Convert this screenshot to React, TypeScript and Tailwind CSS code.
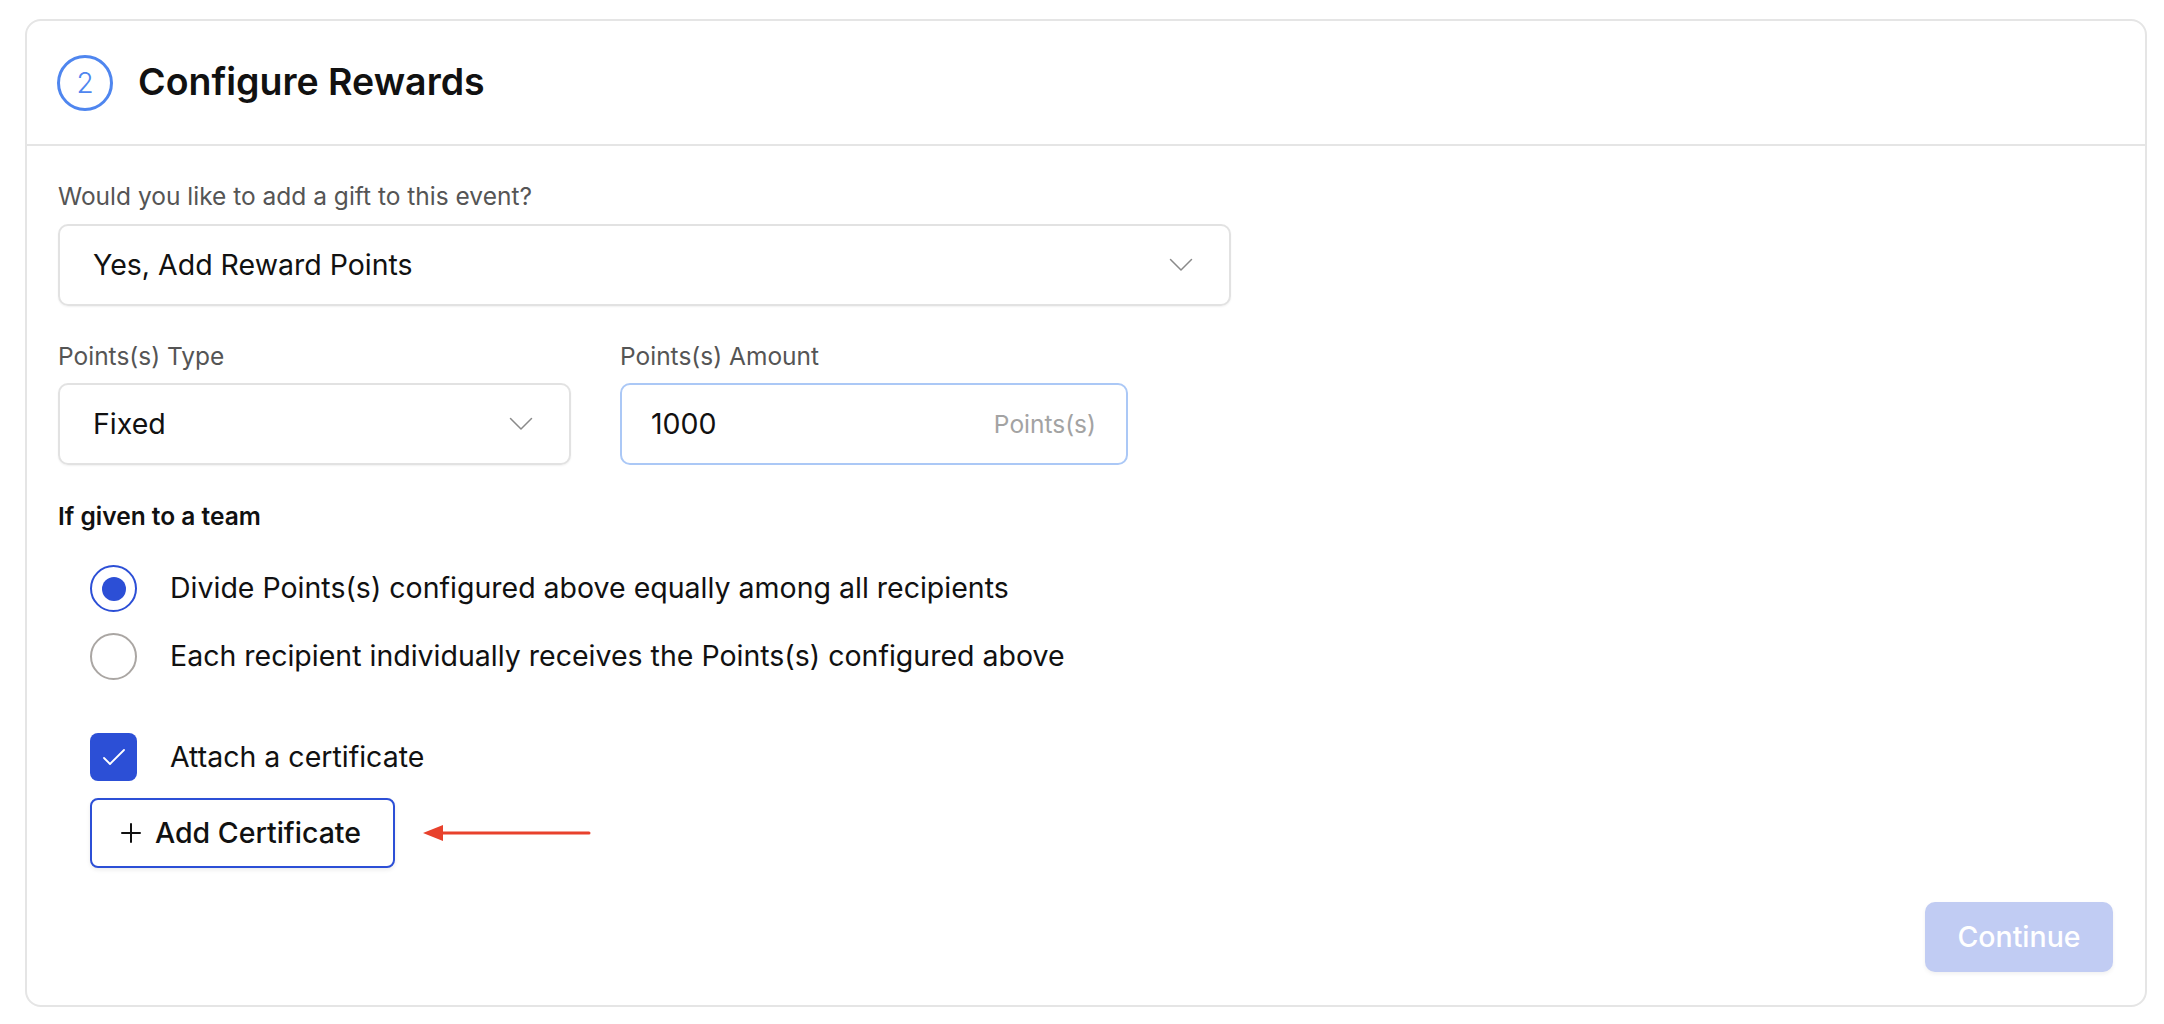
import { useState } from "react";

function Chevron() {
  return (
    <svg width="24" height="14" viewBox="0 0 24 14" fill="none" className="shrink-0">
      <path d="M1.5 1.5L12 12L22.5 1.5" stroke="#8a8a8a" strokeWidth="1.5" strokeLinecap="round" strokeLinejoin="round" />
    </svg>
  );
}

function Radio({ checked, label, onClick }: { checked: boolean; label: string; onClick: () => void }) {
  return (
    <label onClick={onClick} className="flex items-center gap-[33px] cursor-pointer h-[47px]">
      <span
        className={
          checked
            ? "flex items-center justify-center w-[47px] h-[47px] rounded-full border-2 border-[#2c4fd6]"
            : "flex items-center justify-center w-[47px] h-[47px] rounded-full border-2 border-[#aaa6a3]"
        }
      >
        {checked && <span className="w-[24px] h-[24px] rounded-full bg-[#2c4fd6]" />}
      </span>
      <span className="text-[28.5px] text-[#111]">{label}</span>
    </label>
  );
}

export default function App() {
  const [split, setSplit] = useState<"divide" | "each">("divide");
  const [attach, setAttach] = useState<boolean>(true);

  return (
    <div className="min-h-screen bg-white pt-[19px] pl-[25px] pr-[17px] pb-[18px]" style={{ fontFamily: "Inter, 'Noto Sans', sans-serif" }}>
      <div className="border-2 border-[#e5e5e5] rounded-[16px] bg-white">
        <div className="flex items-center gap-[25px] h-[125px] pl-[30px] border-b-2 border-[#e5e5e5]">
          <div className="flex items-center justify-center w-[56px] h-[56px] rounded-full border-[3px] border-[#4f86ef] text-[#4f86ef] text-[28px] font-light">
            2
          </div>
          <h1 className="text-[37.5px] font-semibold text-[#111]">Configure Rewards</h1>
        </div>

        <div className="pt-[36px] pl-[31px] pr-[32px] pb-[33px]">
          <p className="text-[24.5px] leading-[28px] text-[#555] mb-[14px]">Would you like to add a gift to this event?</p>
          <div className="flex items-center justify-between w-[1173px] h-[82px] pl-[33px] pr-[36px] border-2 border-[#e2e2e2] rounded-[10px] shadow-[0_1px_2px_rgba(0,0,0,0.06)]">
            <span className="text-[28.5px] text-[#111]">Yes, Add Reward Points</span>
            <Chevron />
          </div>

          <div className="flex gap-[49px] mt-[36px]">
            <div className="w-[513px]">
              <p className="text-[24.5px] leading-[28px] text-[#555] mb-[13px]">Points(s) Type</p>
              <div className="flex items-center justify-between h-[82px] pl-[33px] pr-[36px] border-2 border-[#e2e2e2] rounded-[10px] shadow-[0_1px_2px_rgba(0,0,0,0.06)]">
                <span className="text-[28.5px] text-[#111]">Fixed</span>
                <Chevron />
              </div>
            </div>
            <div className="w-[508px]">
              <p className="text-[24.5px] leading-[28px] text-[#555] mb-[13px]">Points(s) Amount</p>
              <div className="flex items-center justify-between h-[82px] pl-[29px] pr-[30px] border-2 border-[#abc8f6] rounded-[10px]">
                <span className="text-[28.5px] text-[#111]">1000</span>
                <span className="text-[24.5px] text-[#a3a3a3]">Points(s)</span>
              </div>
            </div>
          </div>

          <p className="text-[24.5px] leading-[28px] font-semibold text-[#111] mt-[37px]">If given to a team</p>

          <div className="flex flex-col gap-[21px] pl-[32px] mt-[35px]">
            <Radio checked={split === "divide"} label="Divide Points(s) configured above equally among all recipients" onClick={() => setSplit("divide")} />
            <Radio checked={split === "each"} label="Each recipient individually receives the Points(s) configured above" onClick={() => setSplit("each")} />
          </div>

          <div className="pl-[32px] mt-[53px]">
            <label onClick={() => setAttach(!attach)} className="flex items-center gap-[33px] cursor-pointer">
              <span className={attach ? "flex items-center justify-center w-[47px] h-[48px] rounded-[8px] bg-[#2c4fd6]" : "flex items-center justify-center w-[47px] h-[48px] rounded-[8px] border-2 border-[#aaa6a3]"}>
                {attach && (
                  <svg width="24" height="18" viewBox="0 0 24 18" fill="none">
                    <path d="M2 10L8 16L22 2" stroke="white" strokeWidth="1.8" strokeLinecap="round" strokeLinejoin="round" />
                  </svg>
                )}
              </span>
              <span className="text-[28.5px] text-[#111]">Attach a certificate</span>
            </label>

            <div className="flex items-center gap-[28px] mt-[17px]">
              <button className="flex items-center gap-[14px] h-[70px] w-[305px] pl-[29px] border-2 border-[#2c4fd6] rounded-[8px] bg-white shadow-[0_2px_4px_rgba(0,0,0,0.08)]">
                <svg width="20" height="20" viewBox="0 0 20 20" fill="none">
                  <path d="M10 1V19M1 10H19" stroke="#111" strokeWidth="2" strokeLinecap="round" />
                </svg>
                <span className="text-[28.5px] font-medium text-[#111]">Add Certificate</span>
              </button>
              <svg width="168" height="20" viewBox="0 0 168 20" fill="none">
                <path d="M14 10H166" stroke="#e8412c" strokeWidth="3" strokeLinecap="round" />
                <path d="M0 10L20 2V18Z" fill="#e8412c" />
              </svg>
            </div>
          </div>

          <div className="flex justify-end mt-[34px]">
            <button className="h-[70px] w-[188px] rounded-[10px] bg-[#c1ccf3] text-white text-[28.5px] font-medium shadow-[0_2px_4px_rgba(0,0,0,0.06)]">
              Continue
            </button>
          </div>
        </div>
      </div>
    </div>
  );
}
